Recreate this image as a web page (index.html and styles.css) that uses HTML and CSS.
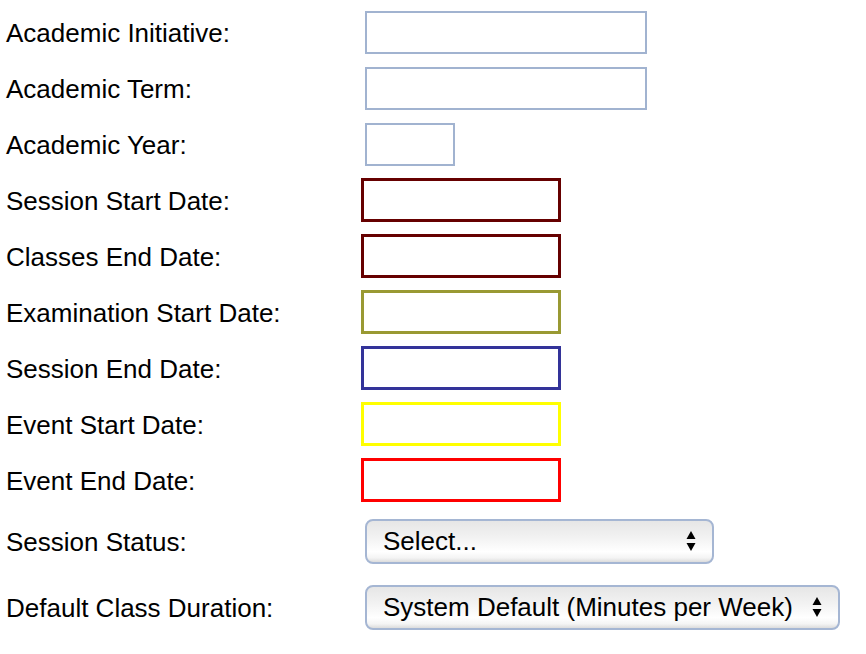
FILE: index.html
```html
<!DOCTYPE html>
<html>
<head>
<meta charset="utf-8">
<link rel="stylesheet" href="styles.css">
</head>
<body>
<div class="form">
  <div class="row"><div class="label">Academic Initiative:</div><input class="field text-wide" type="text"></div>
  <div class="row"><div class="label">Academic Term:</div><input class="field text-wide" type="text"></div>
  <div class="row"><div class="label">Academic Year:</div><input class="field text-short" type="text"></div>
  <div class="row"><div class="label">Session Start Date:</div><input class="field date date-maroon" type="text"></div>
  <div class="row"><div class="label">Classes End Date:</div><input class="field date date-maroon" type="text"></div>
  <div class="row"><div class="label">Examination Start Date:</div><input class="field date date-olive" type="text"></div>
  <div class="row"><div class="label">Session End Date:</div><input class="field date date-navy" type="text"></div>
  <div class="row"><div class="label">Event Start Date:</div><input class="field date date-yellow" type="text"></div>
  <div class="row"><div class="label">Event End Date:</div><input class="field date date-red" type="text"></div>
  <div class="row row-tall"><div class="label">Session Status:</div>
    <div class="select select-status"><span class="select-text">Select...</span>
      <svg class="arrows" width="10" height="21" viewBox="0 0 10 21"><polygon points="5,0 9.5,8 0.5,8" fill="#000"/><polygon points="0.5,12 9.5,12 5,20" fill="#000"/></svg>
    </div>
  </div>
  <div class="row row-tall"><div class="label">Default Class Duration:</div>
    <div class="select select-duration"><span class="select-text">System Default (Minutes per Week)</span>
      <svg class="arrows" width="10" height="21" viewBox="0 0 10 21"><polygon points="5,0 9.5,8 0.5,8" fill="#000"/><polygon points="0.5,12 9.5,12 5,20" fill="#000"/></svg>
    </div>
  </div>
</div>
</body>
</html>
```
FILE: styles.css
```css
html, body {
  margin: 0;
  padding: 0;
  background: #ffffff;
}
body {
  font-family: "Liberation Sans", Arial, sans-serif;
  font-size: 26px;
  color: #000;
}
.form {
  padding-top: 4px;
}
.row {
  display: flex;
  align-items: center;
  height: 56px;
}
.row-tall {
  height: 66px;
}
.label {
  width: 361px;
  box-sizing: border-box;
  padding-left: 6px;
  padding-top: 2px;
  line-height: 30px;
  white-space: nowrap;
}
.field {
  box-sizing: border-box;
  margin: 0;
  padding: 0;
  background: #fff;
  outline: none;
  font: inherit;
}
.text-wide {
  margin-left: 4px;
  width: 282px;
  height: 43px;
  border: 2px solid #a1b3d0;
}
.text-short {
  margin-left: 4px;
  width: 90px;
  height: 43px;
  border: 2px solid #a1b3d0;
}
.date {
  width: 200px;
  height: 44px;
  border: 3px solid #660000;
}
.date-maroon { border-color: #660000; }
.date-olive { border-color: #999933; }
.date-navy { border-color: #333399; }
.date-yellow { border-color: #ffff00; }
.date-red { border-color: #ff0000; }
.select {
  margin-left: 4px;
  box-sizing: border-box;
  height: 45px;
  border: 2px solid #a5b6d3;
  border-radius: 8px;
  background: linear-gradient(#e6e6e6 0%, #f2f2f2 40%, #ffffff 75%, #f4f4f4 90%, #dcdcdc 100%);
  display: flex;
  align-items: center;
  padding-left: 16px;
  padding-right: 16px;
}
.select-status { width: 349px; }
.select-duration { width: 475px; }
.select-text {
  flex: 1;
  white-space: nowrap;
  line-height: 30px;
}
.arrows {
  display: block;
  flex: none;
}
```
